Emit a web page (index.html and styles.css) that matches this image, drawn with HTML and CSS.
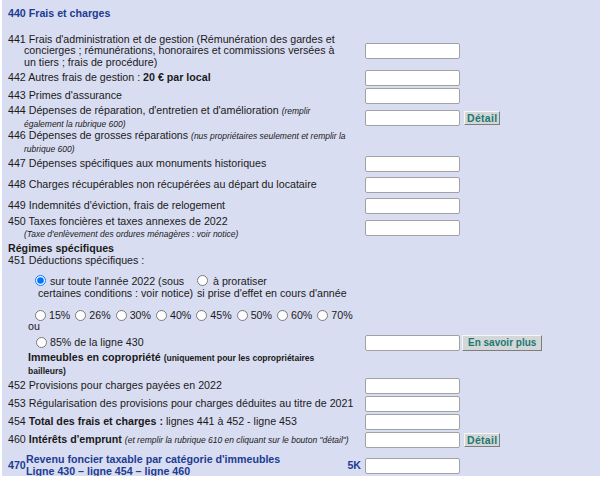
FILE: index.html
```html
<!DOCTYPE html>
<html lang="fr">
<head>
<meta charset="utf-8">
<title>Frais et charges</title>
<link rel="stylesheet" href="styles.css">
</head>
<body>
<div class="panel">
  <div class="row r-head"><div class="title">440 Frais et charges</div></div>

  <div class="row r36">
    <div class="lbl">441 Frais d'administration et de gestion (Rémunération des gardes et<br>concierges ; rémunérations, honoraires et commissions versées à<br>un tiers ; frais de procédure)</div>
    <input class="fld" type="text">
  </div>
  <div class="row r18">
    <div class="lbl">442 Autres frais de gestion : <b>20 € par local</b></div>
    <input class="fld" type="text">
  </div>
  <div class="row r18">
    <div class="lbl">443 Primes d'assurance</div>
    <input class="fld" type="text">
  </div>
  <div class="row r25">
    <div class="lbl">444 Dépenses de réparation, d'entretien et d'amélioration <i class="note">(remplir<br>également la rubrique 600)</i></div>
    <input class="fld" type="text">
    <button class="btn" type="button">Détail</button>
  </div>
  <div class="row r23">
    <div class="lbl">446 Dépenses de grosses réparations <i class="note">(nus propriétaires seulement et remplir la<br>rubrique 600)</i></div>
  </div>
  <div class="row r22">
    <div class="lbl">447 Dépenses spécifiques aux monuments historiques</div>
    <input class="fld" type="text">
  </div>
  <div class="row r20">
    <div class="lbl">448 Charges récupérables non récupérées au départ du locataire</div>
    <input class="fld" type="text">
  </div>
  <div class="row r21">
    <div class="lbl">449 Indemnités d'éviction, frais de relogement</div>
    <input class="fld" type="text">
  </div>
  <div class="row r22">
    <div class="lbl">450 Taxes foncières et taxes annexes de 2022<br><i class="note">(Taxe d'enlèvement des ordures ménagères : voir notice)</i></div>
    <input class="fld" type="text">
  </div>

  <div class="row r16 end"><div class="full"><b>Régimes spécifiques</b></div></div>
  <div class="row r13"><div class="lbl">451 Déductions spécifiques :</div></div>

  <div class="row r32 end">
    <div class="choices">
      <div class="choice1"><input class="rad" type="radio" name="periode" checked>sur toute l'année 2022 (sous<br>&nbsp;certaines conditions : voir notice)</div>
      <div class="choice2"><input class="rad rad-wide" type="radio" name="periode">à proratiser<br>si prise d'effet en cours d'année</div>
    </div>
  </div>
  <div class="row r22 end">
    <div class="pcts">
      <label class="pct"><input class="rad" type="radio" name="taux">15%</label>
      <label class="pct"><input class="rad" type="radio" name="taux">26%</label>
      <label class="pct"><input class="rad" type="radio" name="taux">30%</label>
      <label class="pct"><input class="rad" type="radio" name="taux">40%</label>
      <label class="pct"><input class="rad" type="radio" name="taux">45%</label>
      <label class="pct"><input class="rad" type="radio" name="taux">50%</label>
      <label class="pct"><input class="rad" type="radio" name="taux">60%</label>
      <label class="pct"><input class="rad" type="radio" name="taux">70%</label>
    </div>
  </div>
  <div class="row r12"><div class="sub">ou</div></div>
  <div class="row r19">
    <label class="opt85"><input class="rad" type="radio" name="taux">85% de la ligne 430</label>
    <input class="fld" type="text">
    <button class="btn btn-more" type="button">En savoir plus</button>
  </div>
  <div class="row r25 end">
    <div class="sub"><b>Immeubles en copropriété</b> <b class="small">(uniquement pour les copropriétaires<br>bailleurs)</b></div>
  </div>

  <div class="row r18">
    <div class="lbl">452 Provisions pour charges payées en 2022</div>
    <input class="fld" type="text">
  </div>
  <div class="row r18">
    <div class="lbl">453 Régularisation des provisions pour charges déduites au titre de 2021</div>
    <input class="fld" type="text">
  </div>
  <div class="row r18">
    <div class="lbl">454 <b>Total des frais et charges :</b> lignes 441 à 452 - ligne 453</div>
    <input class="fld" type="text">
  </div>
  <div class="row r18">
    <div class="lbl">460 <b>Intérêts d'emprunt</b> <i class="note">(et remplir la rubrique 610 en cliquant sur le bouton "détail")</i></div>
    <input class="fld" type="text">
    <button class="btn" type="button">Détail</button>
  </div>

  <div class="row r-last">
    <div class="total">
      <span class="num">470</span>
      <span class="rev">Revenu foncier taxable par catégorie d'immeubles<br>Ligne 430 – ligne 454 – ligne 460</span>
      <span class="code">5K</span>
    </div>
    <input class="fld" type="text">
  </div>
</div>
</body>
</html>
```

FILE: styles.css
```css
* { box-sizing: border-box; }

body {
  margin: 0;
  background: #ffffff;
  color: #1a1a1a;
  font-family: "Liberation Sans", Arial, sans-serif;
  font-size: 10.67px;
  line-height: 11.5px;
}

.panel {
  margin-left: 2px;
  width: 598px;
  height: 476px;
  padding-left: 6px;
  background: #d9ddf1;
  display: flex;
  flex-direction: column;
}

.row {
  display: grid;
  grid-template-columns: 353px 95px auto;
  column-gap: 4px;
  align-items: center;
  flex: none;
}
.row.end { align-items: end; }

.r-head { height: 33px; align-items: start; padding-top: 8px; }
.r12 { height: 12px; }
.r13 { height: 13px; }
.r16 { height: 16px; }
.r18 { height: 18px; }
.r19 { height: 19px; }
.r20 { height: 20px; }
.r21 { height: 21px; }
.r22 { height: 22px; }
.r23 { height: 23px; }
.r25 { height: 25px; }
.r32 { height: 32px; }
.r36 { height: 36px; }
.r-last { height: 27px; padding-top: 5px; }

.title {
  grid-column: 1 / -1;
  color: #203c92;
  font-weight: bold;
}

.full { grid-column: 1 / -1; }

.lbl {
  padding-left: 16px;
  text-indent: -16px;
}

.note {
  font-size: 8.5px;
  font-style: italic;
}

.small { font-size: 8.5px; }

.sub { padding-left: 20px; }

.fld {
  grid-column: 2;
  width: 95px;
  height: 16px;
  margin: 0;
  padding: 0 2px;
  border: 1px solid #a2a2a2;
  border-radius: 2px;
  background: #ffffff;
  font: inherit;
}

.btn {
  justify-self: start;
  height: 14px;
  margin: 0;
  padding: 0 2px;
  font-family: "Liberation Sans", Arial, sans-serif;
  font-weight: bold;
  font-size: 10.5px;
  line-height: 12px;
  letter-spacing: 0.3px;
  color: #1f7774;
  background: #d3d7d7;
  border: 1px solid;
  border-color: #f6f6f6 #7d7d7d #7d7d7d #f6f6f6;
}
.btn-more {
  height: 16px;
  margin-left: -2px;
  padding: 0 5px;
  font-size: 10px;
  letter-spacing: 0;
}

.rad {
  width: 11px;
  height: 11px;
  margin: 0 4px 0 0;
  vertical-align: -1px;
}
.rad-wide { margin-right: 5px; }

.choices {
  grid-column: 1 / -1;
  display: flex;
  padding-left: 27px;
  white-space: nowrap;
}
.choice1 { width: 162px; }

.pcts {
  grid-column: 1 / -1;
  display: flex;
  gap: 5px;
  padding-left: 27px;
}
.pct {
  display: inline-flex;
  align-items: center;
}
.pct .rad { margin-right: 3px; }

.opt85 {
  display: flex;
  align-items: center;
  padding-left: 28px;
}
.opt85 .rad { margin-right: 3px; }

.total {
  display: flex;
  align-items: center;
  color: #203c92;
  font-weight: bold;
}
.num {
  width: 18px;
  font-size: 10.67px;
}
.code {
  margin-left: auto;
}
```
